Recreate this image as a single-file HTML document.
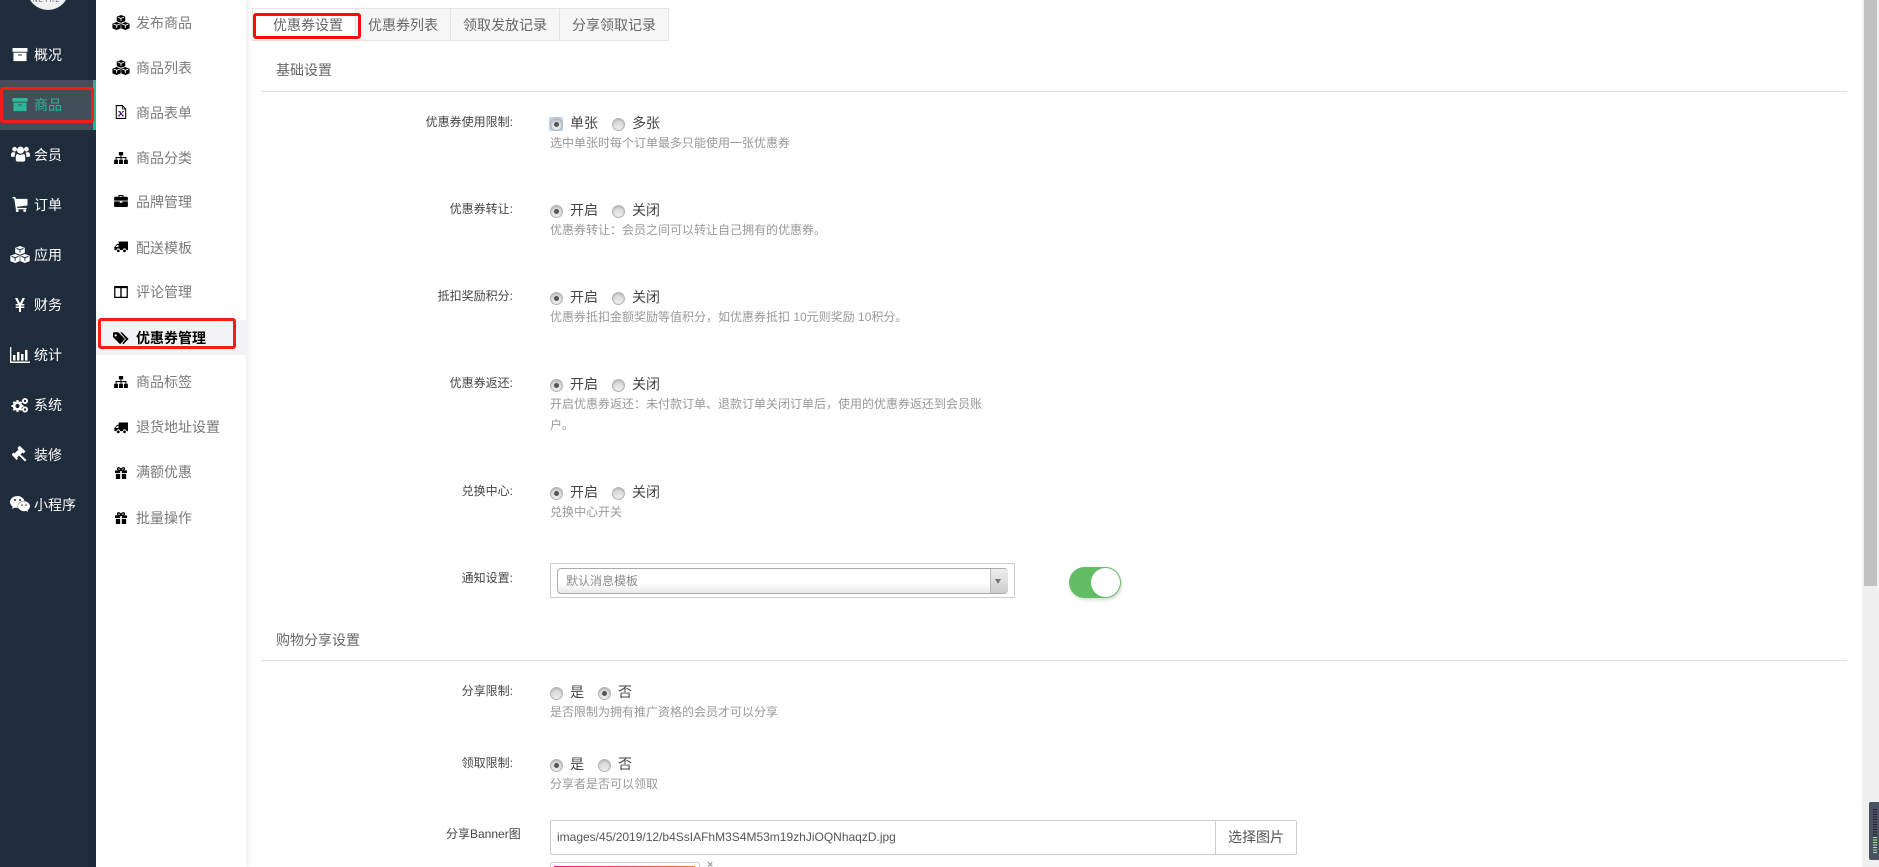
<!DOCTYPE html>
<html lang="zh-CN">
<head>
<meta charset="utf-8">
<title>优惠券设置</title>
<style>
html,body{margin:0;padding:0;width:1879px;height:867px;overflow:hidden;background:#fff}
body{position:relative;font-family:"Liberation Sans","Noto Sans CJK SC",sans-serif;font-size:14px;color:#555}
.a,.t,.r,svg.i{position:absolute}
.t{white-space:nowrap;line-height:20px;height:20px}
.side{left:0;top:0;width:96px;height:867px;background:#1f2c3b}
.sub{left:96px;top:0;width:150px;height:867px;background:#fff;box-shadow:2px 0 6px rgba(0,0,0,.08)}
.m{left:34px;color:#fff;font-size:14px}
.s{left:136px;color:#7a7a7a;font-size:14px}
.lb{right:1366px;color:#444;font-size:12px}
.h{left:550px;color:#999;font-size:12px}
.o{color:#444;font-size:14px}
.r{width:11px;height:11px;border-radius:50%;border:1px solid #b4b4b4;background:linear-gradient(#d4d4d4,#eee);box-shadow:inset 0 1px 2px rgba(0,0,0,.18)}
.r.c:after{content:"";position:absolute;left:3px;top:3px;width:5px;height:5px;border-radius:50%;background:#555}
.tab{top:8px;height:33px;line-height:32px;box-sizing:border-box;border:1px solid #e4e4e4;background:#f6f6f6;text-align:center;color:#666;font-size:14px}
.red{border:3px solid #f80d0d;border-radius:3px;box-sizing:border-box}
.line{height:1px;background:#e0e0e0;left:261px;width:1586px}
svg.w{fill:#fff;color:#fff;--l:#1f2c3b}
svg.k{fill:#000;color:#000;--l:#fff}
</style>
</head>
<body>
<svg width="0" height="0" style="position:absolute">
<defs>
<symbol id="box" viewBox="0 0 16 16"><path d="M0 1h16v4H0zM1 6h14v9H1zM6 8v1h4V8z" fill-rule="evenodd"/></symbol>
<symbol id="cubes" viewBox="0 0 20 17"><path d="M10 0l4.800 1.900v5L10 8.800 5.200 6.900v-5zM5.100 8l4.600 1.800v5.300L5.100 17 .3 15.100V9.800zM14.900 8l4.800 1.800v5.300L14.900 17l-4.600-1.900V9.800z"/><path d="M6.500 2.400L10 3.800l3.500-1.400M10 3.800v3M1.600 10.300l3.500 1.400 3.500-1.400M5.100 11.700v3M11.400 10.300l3.500 1.400 3.500-1.400M14.900 11.700v3" fill="none" stroke="var(--l)" stroke-width="1"/></symbol>
<symbol id="xl" viewBox="0 0 14 16"><path d="M1.500.5h7l4 4v11h-11z" fill="#fff" stroke="#000" stroke-width="1.200"/><path d="M8.500.5v4h4" fill="none" stroke="#000"/><path d="M4 7h2.500v1l1 1.500L8.500 8V7H10.500v1h-1L8 10l1.500 2h1v1H8v-1l-1-1.200L6 12v1H3.500v-1h1L6 10 4.800 8H4z" fill="#3a0a52"/></symbol>
<symbol id="map" viewBox="0 0 16 14"><path d="M5.500 0h5v4h-5zM0 9h4.500v5H0zM5.750 9h4.500v5h-4.500zM11.500 9H16v5h-4.500z"/><path d="M2.200 9V6.500h11.600V9M8 4v5" fill="none" stroke="#000" stroke-width="1.200"/></symbol>
<symbol id="case" viewBox="0 0 16 14"><path d="M5 2V.8Q5 0 6 0h4q1 0 1 .8V2h4q1 0 1 1v3.500H0V3q0-1 1-1zM6.200 2h3.600V1.200H6.200zM0 7.500h6.500V9h3V7.500H16V13q0 1-1 1H1q-1 0-1-1z"/></symbol>
<symbol id="truck" viewBox="0 0 18 14"><path d="M6 0h12v11h-2.200a2.300 2.300 0 0 0-4.600 0H7.800a2.300 2.300 0 0 0-4.600 0H.5V7L4 3h2zM2 7h3.800V4.500H4z" fill-rule="evenodd"/><circle cx="5.500" cy="12" r="1.800"/><circle cx="13.500" cy="12" r="1.800"/></symbol>
<symbol id="cols" viewBox="0 0 16 14"><path d="M0 0h16v14H0zM1.500 2.500v10h5.700v-10zM8.800 2.500v10h5.700v-10z" fill-rule="evenodd"/></symbol>
<symbol id="tags" viewBox="0 0 18 14"><path d="M0 1.200Q0 0 1.200 0H6l7.500 7.500L8 13.500.0 5.500zM3 2.200a1.300 1.300 0 1 0 .01 0z" fill-rule="evenodd"/><path d="M8 0h2l7.500 7.500-5.800 6-1.200-1.200L14.500 7.500z"/></symbol>
<symbol id="gift" viewBox="0 0 14 14"><path d="M0 4h14v3H0zM1 8h12v6H1z"/><path d="M6 4h2v10H6z" fill="#fff"/><path d="M7 4C5 4 3 3.500 3 2s3-2 4 2c1-4 4-3.500 4-2s-2 2-4 2z" fill="none" stroke="#000" stroke-width="1.500"/></symbol>
<symbol id="users" viewBox="0 0 20 16"><circle cx="3.800" cy="3" r="2.500"/><circle cx="16.200" cy="3" r="2.500"/><circle cx="10" cy="4" r="3.700"/><path d="M0 9q0-3 2.500-3 1.500 0 2.200.8-1 1.500-.9 4.200H1q-1 0-1-1.500zM20 9q0-3-2.500-3-1.500 0-2.200.8 1 1.500.9 4.200H19q1 0 1-1.500zM5 11.500q0-3.500 2-3.500 3 1.800 6 0 2 0 2 3.500v2.500q0 2-2 2H7q-2 0-2-2z"/></symbol>
<symbol id="cart" viewBox="0 0 16 16"><path d="M0 0h3l.6 2H16v7L4.800 10.500l.3 1.100H15v1.400H3.600L1.800 1.400H0z"/><circle cx="5" cy="14.500" r="1.500"/><circle cx="13" cy="14.500" r="1.500"/></symbol>
<symbol id="yen" viewBox="0 0 10 14"><path d="M0 0h2.500L5 5.200 7.500 0H10L7 6h2.300v1.500H6v1h3.300V10H6v4H4v-4H.7V8.500H4v-1H.7V6H3z"/></symbol>
<symbol id="chart" viewBox="0 0 20 16"><path d="M0 0h1.300v14.500H20V16H0z"/><path d="M3 8h2.500v5.500H3zM7 5h2.500v8.500H7zM11 7h2.500v6.500H11zM15 3h2.500v10.500H15z"/></symbol>
<symbol id="cogs" viewBox="0 0 18 16"><circle cx="6.500" cy="9" r="3.400" fill="none" stroke="currentColor" stroke-width="2.600"/><circle cx="14" cy="4" r="2.100" fill="none" stroke="currentColor" stroke-width="1.800"/><circle cx="14" cy="12.500" r="2.100" fill="none" stroke="currentColor" stroke-width="1.800"/><path d="M6.500 3v2M6.500 13v2M.5 9h2M10.500 9h2M2.300 4.800l1.400 1.400M9.300 11.800l1.400 1.400M10.700 4.800L9.300 6.200M2.300 13.200l1.400-1.400" stroke="currentColor" stroke-width="2"/></symbol>
<symbol id="gavel" viewBox="0 0 16 16"><path d="M7.500 0l6 6-2 2-1-1-2 2 6 5.500-1.500 1.500L7 10l-2 2 1 1-1.500 1.500-5-5.500L1.500 7l1 1 4-4-1-1.500z" transform="translate(0 -.5)"/></symbol>
<symbol id="wx" viewBox="0 0 20 16"><path d="M7.500 0C3.400 0 0 2.700 0 6c0 2 1.100 3.500 2.800 4.700L2 13l2.700-1.400c1 .3 1.800.4 2.800.4h.5C7.800 11.400 7.700 11 7.700 10.400 7.700 7.300 10.300 5 13.800 5h.7C13.700 2.200 10.900 0 7.500 0z"/><path d="M20 10.200c0-2.700-2.700-5-6-5s-6 2.300-6 5 2.700 5 6 5c.7 0 1.400-.1 2-.3l2 1.100-.5-1.800c1.500-1 2.500-2.400 2.500-4z"/><g fill="#1f2c3b"><circle cx="5" cy="4" r="1"/><circle cx="10" cy="4" r="1"/><circle cx="12" cy="9" r=".8"/><circle cx="16" cy="9" r=".8"/></g></symbol>
</defs>
</svg>

<!-- main sidebar -->
<div class="a side"></div>
<div class="a" style="left:27px;top:-32px;width:42px;height:42px;border-radius:50%;background:#f2f2f2"></div>
<div class="t" style="left:33px;top:-5px;font-size:6px;letter-spacing:1.500px;color:#44506a;line-height:12px;height:12px">NETHE</div>
<div class="a" style="left:0;top:80px;width:96px;height:50px;background:#434e5b"></div>
<div class="a" style="left:93px;top:80px;width:3px;height:50px;background:#2ab795"></div>
<div class="a red" style="left:0;top:87px;width:94px;height:36px;border-color:#f81d12"></div>

<svg class="i w" style="left:12px;top:47px" width="16" height="15"><use href="#box"/></svg>
<svg class="i" style="left:12px;top:97px;fill:#2ab795" width="16" height="15"><use href="#box"/></svg>
<svg class="i w" style="left:11px;top:146px" width="19" height="16"><use href="#users"/></svg>
<svg class="i w" style="left:12px;top:197px" width="16" height="15"><use href="#cart"/></svg>
<svg class="i w" style="left:10px;top:246px" width="20" height="17"><use href="#cubes"/></svg>
<svg class="i w" style="left:15px;top:298px" width="10" height="14"><use href="#yen"/></svg>
<svg class="i w" style="left:10px;top:347px" width="20" height="16"><use href="#chart"/></svg>
<svg class="i w" style="left:11px;top:397px" width="18" height="16"><use href="#cogs"/></svg>
<svg class="i w" style="left:12px;top:446px" width="16" height="16"><use href="#gavel"/></svg>
<svg class="i w" style="left:10px;top:496px" width="20" height="16"><use href="#wx"/></svg>

<div class="t m" style="top:45px">概况</div>
<div class="t m" style="top:95px;color:#2ab795">商品</div>
<div class="t m" style="top:145px">会员</div>
<div class="t m" style="top:195px">订单</div>
<div class="t m" style="top:245px">应用</div>
<div class="t m" style="top:295px">财务</div>
<div class="t m" style="top:345px">统计</div>
<div class="t m" style="top:395px">系统</div>
<div class="t m" style="top:445px">装修</div>
<div class="t m" style="top:495px">小程序</div>

<!-- sub nav -->
<div class="a sub"></div>
<div class="a" style="left:96px;top:320px;width:150px;height:35px;background:#f3f3f5"></div>
<div class="a red" style="left:98px;top:318px;width:138px;height:31px;border-color:#f81d12"></div>

<svg class="i k" style="left:112px;top:15px" width="18" height="15"><use href="#cubes"/></svg>
<svg class="i k" style="left:112px;top:60px" width="18" height="15"><use href="#cubes"/></svg>
<svg class="i k" style="left:115px;top:105px" width="12" height="14"><use href="#xl"/></svg>
<svg class="i k" style="left:114px;top:152px" width="14" height="12"><use href="#map"/></svg>
<svg class="i k" style="left:114px;top:195px" width="14" height="12"><use href="#case"/></svg>
<svg class="i k" style="left:114px;top:241px" width="14" height="12"><use href="#truck"/></svg>
<svg class="i k" style="left:114px;top:286px" width="14" height="12"><use href="#cols"/></svg>
<svg class="i k" style="left:113px;top:332px" width="16" height="13"><use href="#tags"/></svg>
<svg class="i k" style="left:114px;top:376px" width="14" height="12"><use href="#map"/></svg>
<svg class="i k" style="left:114px;top:422px" width="14" height="12"><use href="#truck"/></svg>
<svg class="i k" style="left:115px;top:467px" width="12" height="12"><use href="#gift"/></svg>
<svg class="i k" style="left:115px;top:512px" width="12" height="12"><use href="#gift"/></svg>

<div class="t s" style="top:13px">发布商品</div>
<div class="t s" style="top:58px">商品列表</div>
<div class="t s" style="top:103px">商品表单</div>
<div class="t s" style="top:148px">商品分类</div>
<div class="t s" style="top:192px">品牌管理</div>
<div class="t s" style="top:238px">配送模板</div>
<div class="t s" style="top:282px">评论管理</div>
<div class="t s" style="top:328px;color:#000;font-weight:700">优惠券管理</div>
<div class="t s" style="top:372px">商品标签</div>
<div class="t s" style="top:417px">退货地址设置</div>
<div class="t s" style="top:462px">满额优惠</div>
<div class="t s" style="top:508px">批量操作</div>

<!-- tabs -->
<div class="a tab" style="left:252px;width:104px;background:#fff;border-right:0;padding-left:7px">优惠券设置</div>
<div class="a tab" style="left:355px;width:96px">优惠券列表</div>
<div class="a tab" style="left:450px;width:110px">领取发放记录</div>
<div class="a tab" style="left:559px;width:110px">分享领取记录</div>
<div class="a red" style="left:253px;top:13px;width:108px;height:26px;border-color:#f80d0d"></div>

<!-- section 1 -->
<div class="t" style="left:276px;top:60px;color:#666">基础设置</div>
<div class="a line" style="top:91px"></div>

<div class="t lb" style="top:112px">优惠券使用限制:</div>
<div class="a" style="left:549px;top:117px;width:14px;height:14px;background:#b8d2f8;border-radius:2px"></div>
<div class="r c" style="left:550px;top:118px"></div>
<div class="t o" style="left:570px;top:113px">单张</div>
<div class="r" style="left:612px;top:118px"></div>
<div class="t o" style="left:632px;top:113px">多张</div>
<div class="t h" style="left:550px;top:133px">选中单张时每个订单最多只能使用一张优惠券</div>

<div class="t lb" style="top:199px">优惠券转让:</div>
<div class="r c" style="left:550px;top:205px"></div>
<div class="t o" style="left:570px;top:200px">开启</div>
<div class="r" style="left:612px;top:205px"></div>
<div class="t o" style="left:632px;top:200px">关闭</div>
<div class="t h" style="top:220px">优惠券转让：会员之间可以转让自己拥有的优惠券。</div>

<div class="t lb" style="top:286px">抵扣奖励积分:</div>
<div class="r c" style="left:550px;top:292px"></div>
<div class="t o" style="left:570px;top:287px">开启</div>
<div class="r" style="left:612px;top:292px"></div>
<div class="t o" style="left:632px;top:287px">关闭</div>
<div class="t h" style="top:307px">优惠券抵扣金额奖励等值积分，如优惠券抵扣 10元则奖励 10积分。</div>

<div class="t lb" style="top:373px">优惠券返还:</div>
<div class="r c" style="left:550px;top:379px"></div>
<div class="t o" style="left:570px;top:374px">开启</div>
<div class="r" style="left:612px;top:379px"></div>
<div class="t o" style="left:632px;top:374px">关闭</div>
<div class="t h" style="top:394px">开启优惠券返还：未付款订单、退款订单关闭订单后，使用的优惠券返还到会员账</div>
<div class="t h" style="top:415px">户。</div>

<div class="t lb" style="top:481px">兑换中心:</div>
<div class="r c" style="left:550px;top:487px"></div>
<div class="t o" style="left:570px;top:482px">开启</div>
<div class="r" style="left:612px;top:487px"></div>
<div class="t o" style="left:632px;top:482px">关闭</div>
<div class="t h" style="top:502px">兑换中心开关</div>

<div class="t lb" style="top:568px">通知设置:</div>
<div class="a" style="left:550px;top:563px;width:463px;height:33px;border:1px solid #ccc"></div>
<div class="a" style="left:557px;top:568px;width:449px;height:24px;border:1px solid #aaa;border-radius:4px;background:linear-gradient(#fff 60%,#e8e8e8)"></div>
<div class="a" style="left:990px;top:569px;width:17px;height:24px;border-left:1px solid #bbb;border-radius:0 3px 3px 0;background:linear-gradient(#eee,#ccc)"></div>
<div class="a" style="left:995px;top:579px;width:0;height:0;border:3.500px solid transparent;border-top:5px solid #777;border-bottom:0"></div>
<div class="t" style="left:566px;top:571px;font-size:12px;color:#888">默认消息模板</div>
<div class="a" style="left:1069px;top:567px;width:52px;height:31px;border-radius:16px;background:#62bd65;box-shadow:1px 2px 3px rgba(0,0,0,.15)"></div>
<div class="a" style="left:1091px;top:568px;width:29px;height:29px;border-radius:50%;background:#fff"></div>

<!-- section 2 -->
<div class="t" style="left:276px;top:630px;color:#666">购物分享设置</div>
<div class="a line" style="top:660px"></div>

<div class="t lb" style="top:681px">分享限制:</div>
<div class="r" style="left:550px;top:687px"></div>
<div class="t o" style="left:570px;top:682px">是</div>
<div class="r c" style="left:598px;top:687px"></div>
<div class="t o" style="left:618px;top:682px">否</div>
<div class="t h" style="top:702px">是否限制为拥有推广资格的会员才可以分享</div>

<div class="t lb" style="top:753px">领取限制:</div>
<div class="r c" style="left:550px;top:759px"></div>
<div class="t o" style="left:570px;top:754px">是</div>
<div class="r" style="left:598px;top:759px"></div>
<div class="t o" style="left:618px;top:754px">否</div>
<div class="t h" style="top:774px">分享者是否可以领取</div>

<div class="t" style="left:446px;top:824px;font-size:12px;color:#444">分享Banner图</div>
<div class="a" style="left:550px;top:820px;width:745px;height:33px;border:1px solid #ccc;border-radius:2px"></div>
<div class="a" style="left:1215px;top:821px;width:1px;height:33px;background:#ccc"></div>
<div class="t" style="left:557px;top:827px;font-size:12px;color:#555">images/45/2019/12/b4SsIAFhM3S4M53m19zhJiOQNhaqzD.jpg</div>
<div class="t" style="left:1228px;top:827px;color:#555">选择图片</div>
<div class="a" style="left:550px;top:862px;width:148px;height:10px;border:1px solid #ccc;border-radius:3px"></div>
<div class="a" style="left:554px;top:866px;width:141px;height:3px;background:linear-gradient(90deg,#ef1c78,#f08030)"></div>
<div class="t" style="left:707px;top:855px;font-size:11px;color:#777">×</div>

<!-- scrollbar -->
<div class="a" style="left:1862px;top:0;width:17px;height:867px;background:#f0f0f0"></div>
<div class="a" style="left:1864px;top:0;width:13px;height:586px;background:#c1c1c1"></div>
<div class="a" style="left:1869px;top:802px;width:10px;height:58px;background:#4a5160;border-radius:2px 0 0 2px"></div>
<div class="a" style="left:1873px;top:809px;width:4px;height:28px;background:repeating-linear-gradient(#22262e 0 1px,#4a5160 1px 2.500px)"></div>
<div class="a" style="left:1873px;top:837px;width:4px;height:16px;background:repeating-linear-gradient(#9ee6a0 0 1px,#4a5160 1px 2.500px)"></div>
</body>
</html>
